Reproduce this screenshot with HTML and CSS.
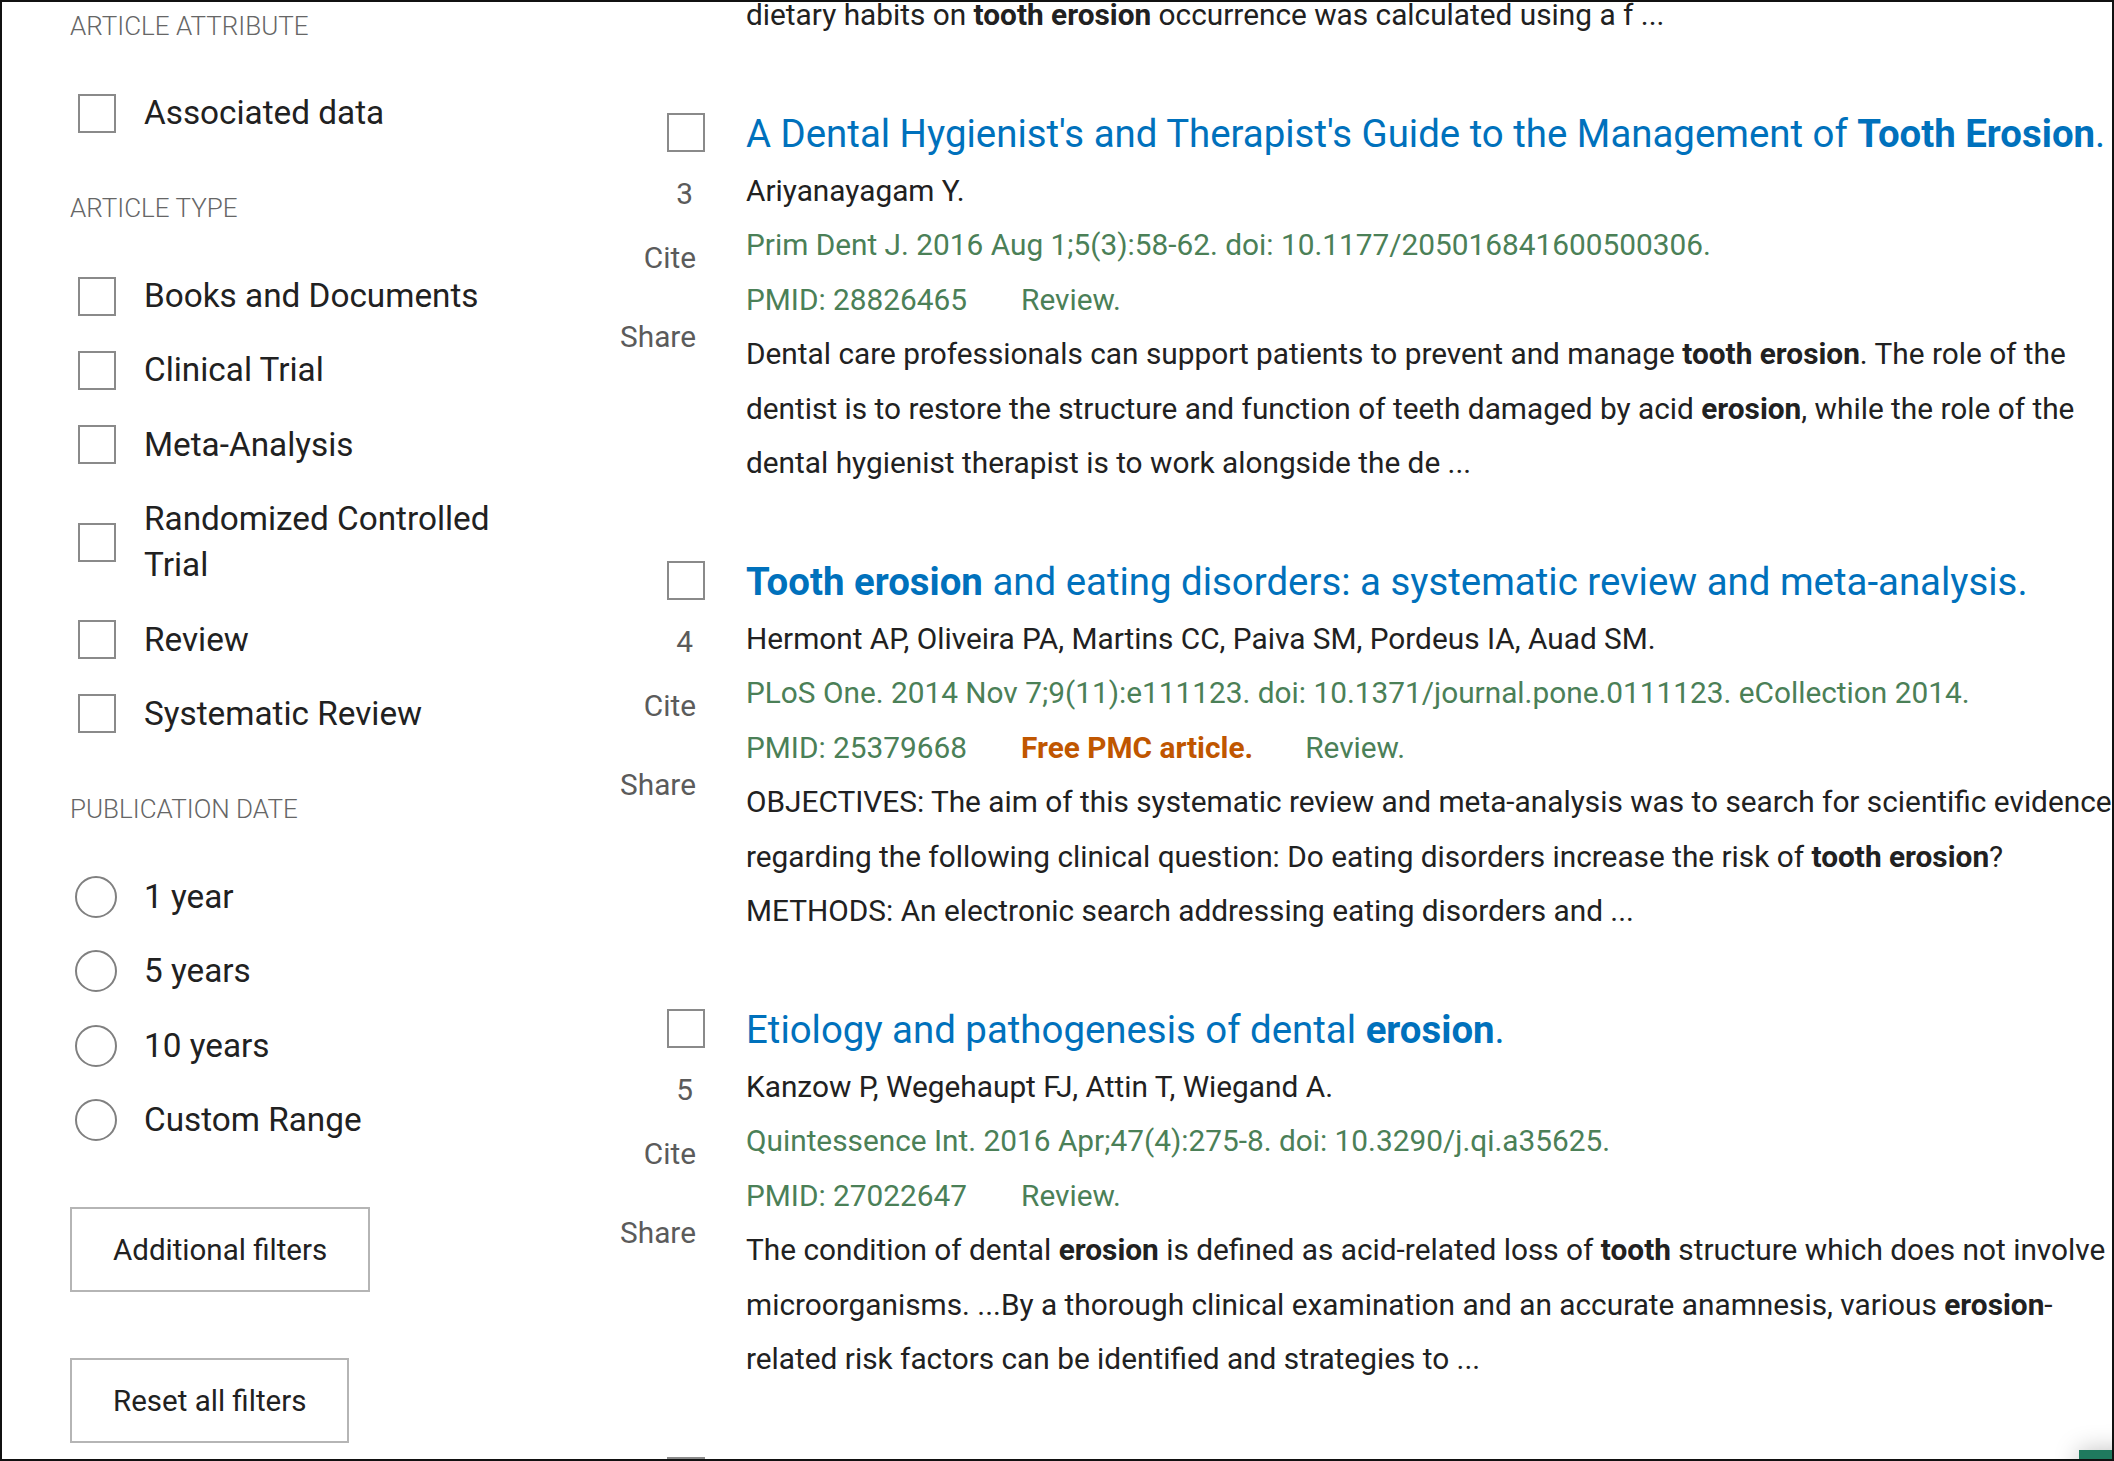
FILE: index.html
```html
<!DOCTYPE html>
<html lang="en">
  <head>
    <meta charset="UTF-8" />
    <meta name="viewport" content="width=device-width, initial-scale=1.0" />
    <title>tooth erosion - Search Results - PubMed</title>
    <link rel="stylesheet" href="styles.css">
  </head>
  <body>
    <div class="page">
      <aside class="filters">
        <h3 class="filter-head first">Article attribute</h3>
        <label class="filter-item">
          <span class="box"></span>
          <span class="filter-label">Associated data</span>
        </label>

        <h3 class="filter-head">Article type</h3>
        <label class="filter-item">
          <span class="box"></span>
          <span class="filter-label">Books and Documents</span>
        </label>
        <label class="filter-item">
          <span class="box"></span>
          <span class="filter-label">Clinical Trial</span>
        </label>
        <label class="filter-item">
          <span class="box"></span>
          <span class="filter-label">Meta-Analysis</span>
        </label>
        <label class="filter-item">
          <span class="box"></span>
          <span class="filter-label">Randomized Controlled Trial</span>
        </label>
        <label class="filter-item">
          <span class="box"></span>
          <span class="filter-label">Review</span>
        </label>
        <label class="filter-item">
          <span class="box"></span>
          <span class="filter-label">Systematic Review</span>
        </label>

        <h3 class="filter-head">Publication date</h3>
        <label class="filter-item">
          <span class="radio"></span>
          <span class="filter-label">1 year</span>
        </label>
        <label class="filter-item">
          <span class="radio"></span>
          <span class="filter-label">5 years</span>
        </label>
        <label class="filter-item">
          <span class="radio"></span>
          <span class="filter-label">10 years</span>
        </label>
        <label class="filter-item">
          <span class="radio"></span>
          <span class="filter-label">Custom Range</span>
        </label>

        <button class="filter-btn first-btn">Additional filters</button>
        <button class="filter-btn">Reset all filters</button>
      </aside>

      <main class="results">
        <div class="docsum-tail">dietary habits on <b>tooth erosion</b> occurrence was calculated using a f ...</div>

        <article class="docsum">
          <div class="docsum-meta">
            <span class="box"></span>
            <span class="position">3</span>
            <span class="action cite">Cite</span>
            <span class="action share">Share</span>
          </div>
          <div class="docsum-content">
            <a class="docsum-title" href="#">A Dental Hygienist's and Therapist's Guide to the Management of <b>Tooth Erosion</b>.</a>
            <div class="docsum-authors">Ariyanayagam Y.</div>
            <div class="docsum-citation">Prim Dent J. 2016 Aug 1;5(3):58-62. doi: 10.1177/205016841600500306.</div>
            <div class="docsum-citation"><span class="pmid">PMID: 28826465</span><span class="pubtype">Review.</span></div>
            <div class="docsum-snippet">Dental care professionals can support patients to prevent and manage <b>tooth erosion</b>. The role of the dentist is to restore the structure and function of teeth damaged by acid <b>erosion</b>, while the role of the dental hygienist therapist is to work alongside the de ...</div>
          </div>
        </article>

        <article class="docsum">
          <div class="docsum-meta">
            <span class="box"></span>
            <span class="position">4</span>
            <span class="action cite">Cite</span>
            <span class="action share">Share</span>
          </div>
          <div class="docsum-content">
            <a class="docsum-title" href="#"><b>Tooth erosion</b> and eating disorders: a systematic review and meta-analysis.</a>
            <div class="docsum-authors">Hermont AP, Oliveira PA, Martins CC, Paiva SM, Pordeus IA, Auad SM.</div>
            <div class="docsum-citation">PLoS One. 2014 Nov 7;9(11):e111123. doi: 10.1371/journal.pone.0111123. eCollection 2014.</div>
            <div class="docsum-citation"><span class="pmid">PMID: 25379668</span><span class="free">Free PMC article.</span><span class="pubtype">Review.</span></div>
            <div class="docsum-snippet">OBJECTIVES: The aim of this systematic review and meta-analysis was to search for scientific evidence regarding the following clinical question: Do eating disorders increase the risk of <b>tooth erosion</b>? METHODS: An electronic search addressing eating disorders and ...</div>
          </div>
        </article>

        <article class="docsum">
          <div class="docsum-meta">
            <span class="box"></span>
            <span class="position">5</span>
            <span class="action cite">Cite</span>
            <span class="action share">Share</span>
          </div>
          <div class="docsum-content">
            <a class="docsum-title" href="#">Etiology and pathogenesis of dental <b>erosion</b>.</a>
            <div class="docsum-authors">Kanzow P, Wegehaupt FJ, Attin T, Wiegand A.</div>
            <div class="docsum-citation">Quintessence Int. 2016 Apr;47(4):275-8. doi: 10.3290/j.qi.a35625.</div>
            <div class="docsum-citation"><span class="pmid">PMID: 27022647</span><span class="pubtype">Review.</span></div>
            <div class="docsum-snippet">The condition of dental <b>erosion</b> is defined as acid-related loss of <b>tooth</b> structure which does not involve microorganisms. ...By a thorough clinical examination and an accurate anamnesis, various <b>erosion</b>-related risk factors can be identified and strategies to ...</div>
          </div>
        </article>

        <article class="docsum">
          <div class="docsum-meta">
            <span class="box"></span>
          </div>
        </article>
      </main>

      <div class="feedback-btn"></div>
    </div>
  </body>
</html>
```
FILE: styles.css
```css
body {
  margin: 0;
  font-family: "Segoe UI", Roboto, sans-serif;
  color: #212121;
  background: #fff;
}
.page {
  position: relative;
  display: flex;
  width: 2114px;
  height: 1461px;
  box-sizing: border-box;
  border: 2px solid #111;
  overflow: hidden;
}

/* sidebar */
.filters {
  flex: none;
  width: 530px;
  padding: 6px 0 0 68px;
}
.filter-head {
  margin: 54px 0 47px;
  font-size: 26px;
  line-height: 36px;
  font-weight: 300;
  color: #666;
  text-transform: uppercase;
}
.filter-head.first {
  margin-top: 0;
  margin-bottom: 46px;
}
.filter-item {
  display: flex;
  align-items: center;
  margin-bottom: 28.4px;
  font-size: 33.3px;
  line-height: 46px;
}
.filter-item .box {
  margin: 0 28px 0 8px;
}
.filter-label {
  width: 396px;
}
.box {
  flex: none;
  display: block;
  width: 38px;
  height: 39px;
  box-sizing: border-box;
  border: 2px solid #8a8a8a;
  background: #fff;
}
.radio {
  flex: none;
  display: block;
  width: 42px;
  height: 42px;
  margin: 0 27px 0 5px;
  box-sizing: border-box;
  border: 2px solid #808080;
  border-radius: 50%;
}
.filter-btn {
  display: block;
  height: 85px;
  padding: 0 41px;
  margin-top: 66px;
  border: 2px solid #b5b5b5;
  background: #fff;
  color: #212121;
  font-family: inherit;
  font-size: 29.5px;
}
.filter-btn.first-btn {
  margin-top: 64px;
}

/* results */
.results {
  flex: none;
  margin-top: -14px;
  font-size: 29.8px;
  line-height: 54.5px;
}
.docsum-tail {
  margin-left: 146px;
  margin-bottom: 61px;
}
.docsum {
  display: flex;
  margin-bottom: 61px;
}
.docsum-meta {
  flex: none;
  display: flex;
  flex-direction: column;
  align-items: flex-end;
  width: 105px;
  color: #5b5b5b;
  line-height: 40px;
}
.docsum-meta .box {
  margin-top: 9px;
}
.position {
  margin-top: 22px;
  padding-right: 12px;
}
.action {
  padding-right: 9px;
}
.cite {
  margin-top: 24px;
}
.share {
  margin-top: 39px;
}
.docsum-content {
  flex: none;
  width: 1370px;
  margin-left: 41px;
}
.docsum-title {
  display: block;
  font-size: 38.4px;
  line-height: 60px;
  color: #0071bc;
  text-decoration: none;
  white-space: nowrap;
}
.docsum-citation {
  color: #4b8057;
}
.pmid {
  margin-right: 54px;
}
.free {
  margin-right: 52px;
  color: #c05600;
  font-weight: bold;
}

.feedback-btn {
  position: absolute;
  left: 2077px;
  top: 1448px;
  width: 70px;
  height: 60px;
  background: #1f7a5e;
  box-shadow: 0 0 24px rgba(0, 0, 0, 0.25);
}
```
